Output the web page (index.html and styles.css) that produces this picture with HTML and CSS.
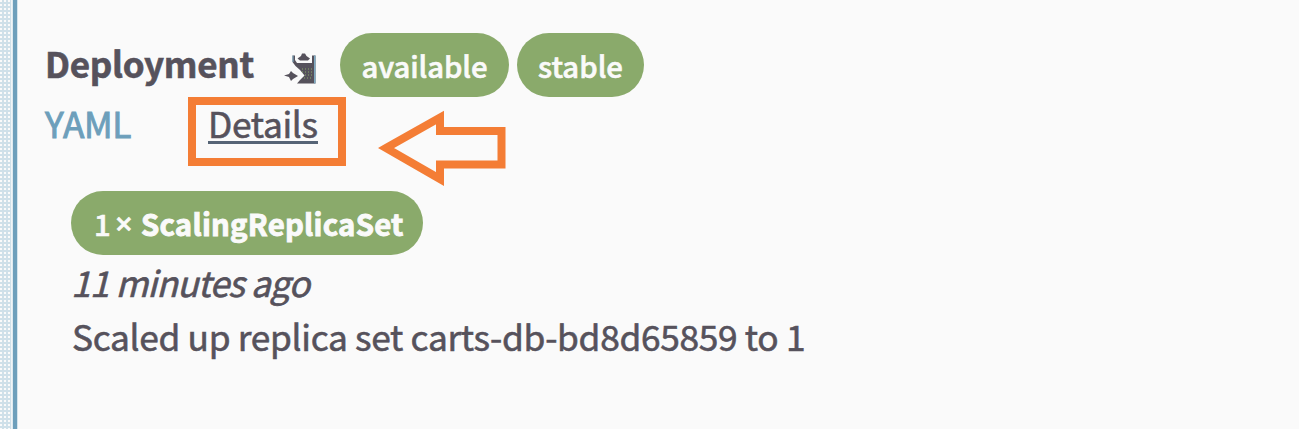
FILE: index.html
```html
<!DOCTYPE html>
<html lang="en">
<head>
<meta charset="utf-8">
<title>Deployment</title>
<link rel="stylesheet" href="styles.css">
</head>
<body>
<div class="page">
  <aside class="rail"></aside>
  <main class="panel">
    <header class="heading">
      <h1 class="title">Deployment</h1>
      <svg class="paste" viewBox="0 0 34 34" width="34" height="34">
        <path fill="#56525c" d="M9.500 4.500H12V9L14 12H29V4.500H32.500V32.500H14L17 29 21.500 24.500 17 19 12.500 15 9.500 11Z"/>
        <path fill="#7fabc3" d="M31 4.500H32.500V32.500H31ZM9.500 4.500H10.500V11H9.500Z"/>
        <path fill="#56525c" d="M14.500 7.500L18 5 19 2.500H22L23.500 5 27 7.500 25 9.500H17Z"/>
        <path fill="#56525c" d="M1 24.500L6 23 8 20 10 22 15 25 10 28 8 30 6 26Z"/>
        <path fill="none" stroke="#8aaa6b" stroke-width="1" stroke-dasharray="1 2" d="M19 18H29M19 21H29M22 24H29M21 27H29"/>
      </svg>
      <span class="pill available"><span class="label">available</span></span>
      <span class="pill stable"><span class="label">stable</span></span>
    </header>
    <nav class="links">
      <a class="yaml">YAML</a>
      <span class="frame"><a class="details">Details</a></span>
      <svg class="arrow" viewBox="0 0 130 78" width="130" height="78">
        <path fill="none" stroke="#f47d35" stroke-width="8" d="M8 39L62 8.500V22H123.500V55.500H62V70Z"/>
      </svg>
    </nav>
    <section class="event">
      <span class="pill reason"><span class="count">1</span><span class="times">×</span><b>ScalingReplicaSet</b></span>
      <div class="age">11 minutes ago</div>
      <div class="message">Scaled up replica set carts-db-bd8d65859 to 1</div>
    </section>
  </main>
</div>
</body>
</html>
```
FILE: styles.css
```css
* { box-sizing: border-box; }
body {
  margin: 0;
  background: #fafafa;
  color: #56525c;
  font: 35.3px/54px "Noto Sans CJK JP", "Noto Sans CJK SC", sans-serif;
  letter-spacing: -0.33px;
  -webkit-text-stroke: 0.6px currentColor;
  white-space: nowrap;
}
.page { display: flex; width: 1299px; height: 429px; overflow: hidden; }
.rail {
  width: 18px;
  border-right: 1px solid #d4e4ec;
  background:
    linear-gradient(90deg, transparent 11px, #fafafa 11px, #d4e4ec 13px, #6d9fbb 13px),
    radial-gradient(circle at 1px 1px, #fafafa 0.8px, transparent 1px) 0 0 / 4px 4px,
    #cfe0e9;
}
.panel { flex: 1; padding: 33px 0 0 27px; }
.heading { display: flex; height: 64px; }
.title {
  margin: 0;
  width: 238px;
  font-size: 35px;
  line-height: 59px;
  font-weight: 700;
  letter-spacing: -0.3px;
}
.paste { margin: 18px 23px 0 0; }
.pill {
  display: flex;
  justify-content: center;
  height: 64px;
  border-radius: 32px;
  background: #8aaa6b;
  color: #fafafa;
  font-size: 29.3px;
  line-height: 64px;
  font-weight: 500;
  letter-spacing: -0.1px;
}
.available { width: 169px; }
.stable { width: 127px; margin-left: 8px; letter-spacing: 0; }
.links { display: flex; height: 94px; }
.yaml { width: 143px; color: #6d9fbb; line-height: 51px; -webkit-text-stroke-width: 0.9px; }
.frame {
  width: 158px;
  height: 69px;
  border: 8px solid #f47d35;
  padding-left: 12px;
  line-height: 36px;
}
.details { display: inline-block; height: 39px; border-bottom: 3px solid #566476; }
.arrow { margin: 12px 0 0 32px; }
.event { padding-left: 26px; }
.reason { width: 352px; justify-content: flex-start; padding-left: 23px; }
.reason b { letter-spacing: 0.25px; -webkit-text-stroke-width: 0.9px; }
.count { width: 21px; }
.times { width: 26px; font-family: "Open Sans", sans-serif; font-weight: 600; font-size: 31px; line-height: 65px; }
.age { height: 55px; line-height: 53px; font-style: italic; letter-spacing: -0.85px; }
.message { height: 54px; line-height: 52px; padding-left: 1px; }
```
